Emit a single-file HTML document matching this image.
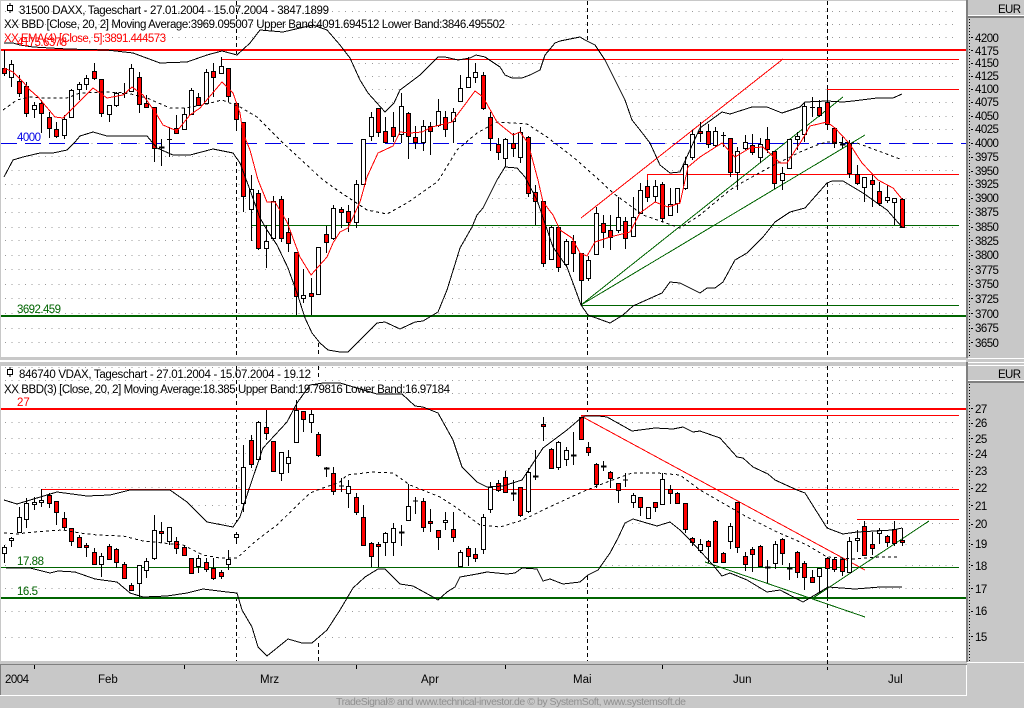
<!DOCTYPE html>
<html><head><meta charset="utf-8"><title>DAX VDAX chart</title>
<style>
html,body{margin:0;padding:0;background:#c8c8c8;width:1024px;height:708px;overflow:hidden}
svg{display:block}
text{font-family:"Liberation Sans",sans-serif;font-size:11.5px}
</style></head><body>
<svg xmlns="http://www.w3.org/2000/svg" width="1024" height="708" viewBox="0 0 1024 708" fill="none" shape-rendering="crispEdges">
<rect width="1024" height="708" fill="#c8c8c8"/>
<!-- chart backgrounds -->
<rect x="1" y="1" width="965" height="356" fill="#fff"/>
<rect x="1" y="366" width="965" height="295" fill="#fff"/>
<rect x="0" y="360" width="966" height="2" fill="#fff"/>
<!-- dotted grid top -->
<path stroke="#999" stroke-dasharray="1 5.67" d="M5 37.5H958M5 50.5H958M5 63.5H958M5 76.5H958M5 89.5H958M5 102.5H958M5 116.5H958M5 129.5H958M5 143.5H958M5 156.5H958M5 170.5H958M5 184.5H958M5 198.5H958M5 212.5H958M5 227.5H958M5 240.5H958M5 255.5H958M5 269.5H958M5 284.5H958M5 298.5H958M5 313.5H958M5 328.5H958M5 342.5H958M5 24.5H958M5 11.5H958"/>
<!-- dotted grid bottom -->
<path stroke="#999" stroke-dasharray="1 5.67" d="M5 367.5H958M5 380.5H958M5 393.5H958M5 422.5H958M5 438.5H958M5 453.5H958M5 470.5H958M5 487.5H958M5 505.5H958M5 523.5H958M5 544.5H958M5 565.5H958M5 588.5H958M5 611.5H958M5 637.5H958"/>
<!-- vertical dashed -->
<path stroke="#000" stroke-dasharray="4 3" d="M236.5 1V357M587.5 1V357M827.5 1V357M318.5 343V357M236.5 366V661M318.5 366V380M318.5 643V661M587.5 366V661M827.5 366V670"/>
<!-- white fill between bands -->
<polygon fill="#fff" points="4,43 13,43 20,45 33,47 67,49 107,50 133,53 160,63 187,62 207,55 222,51 237,55 250,43 260,30 283,32 313,25 327,30 340,45 350,58 360,80 368,93 385,112 394,103 400,90 420,75 438,57 445,57 458,60 470,58 476,55 485,57 500,67 505,75 512,78 522,78 530,75 540,70 545,55 555,43 560,41 580,37 585,40 595,45 605,60 615,80 625,100 632,120 640,130 650,143 660,165 670,173 680,172 690,150 700,128 722,112 730,114 752,107 767,107 782,113 800,107 805,102 827,101 843,102 853,101 877,98 893,98 902,94 902,227 887,210 863,193 843,181 832,181 827,183 805,208 790,212 775,222 763,237 747,253 735,260 723,282 715,288 707,288 700,293 680,283 670,282 662,293 633,306 623,315 610,323 588,315 581,305 573,283 567,267 553,247 537,200 525,177 517,168 505,167 497,180 483,208 477,215 472,227 460,248 447,290 438,312 423,321 415,322 400,329 385,322 377,323 367,333 348,352 340,352 328,350 320,343 312,333 305,318 297,293 288,268 277,245 267,230 260,218 240,163 233,153 213,149 190,155 173,155 157,148 147,136 107,136 93,132 80,136 75,142 67,150 53,153 40,153 23,157 13,160 4,177"/>
<polygon fill="#fff" points="4,500 17,504 37,498 57,492 87,496 110,495 130,490 170,490 187,502 207,522 233,527 240,517 248,492 263,448 287,422 297,403 310,385 323,383 340,383 377,394 402,394 415,406 423,407 438,413 453,440 462,467 477,482 487,487 503,486 522,480 543,448 567,430 581,418 585,416 598,416 607,417 632,431 655,428 673,429 683,427 693,432 700,431 720,438 737,457 743,458 753,467 768,474 775,480 797,490 805,493 827,528 843,534 857,532 893,530 902,528 902,587 880,587 855,589 828,587 820,592 803,602 780,590 767,592 747,580 730,573 722,576 708,563 690,550 680,530 670,522 657,526 633,519 625,523 618,538 598,570 588,575 580,582 563,584 550,579 543,581 537,569 522,568 515,573 507,574 487,572 477,574 460,577 455,587 447,592 438,600 433,597 413,586 400,584 385,569 378,569 365,577 353,588 340,610 327,630 312,643 302,643 288,639 267,656 258,647 252,627 242,610 237,593 227,592 203,589 187,593 167,596 143,597 130,593 117,582 95,579 75,572 58,571 50,573 30,568 6,568"/>
<!-- horizontal lines top -->
<path stroke="#0000e6" stroke-dasharray="16 8" d="M1 143.5H966"/>
<rect x="1" y="49" width="965" height="2" fill="#f00"/>
<path stroke="#f00" d="M222 59.5H959M647 174.5H959M647.5 174V186M827 89.5H959"/>
<path stroke="#f00" d="M581 218L783 59"/>
<rect x="1" y="315" width="965" height="2" fill="#006400"/>
<path stroke="#006400" d="M251 225.5H959M581 305.5H959M581 305L865 135M581 305L843 97"/>
<!-- horizontal lines bottom -->
<rect x="1" y="408" width="965" height="2" fill="#f00"/>
<path stroke="#f00" d="M581 415.5H959M41 489.5H959M41.5 489V500M857 519.5H959M581 416L865 570"/>
<rect x="1" y="597" width="965" height="2" fill="#006400"/>
<path stroke="#006400" d="M1 567.5H959M705 562L865 617M813 598L929 521"/>
<!-- wicks top -->
<path stroke="#000" d="M4.5 50V76M11.5 60V87M19.5 75V97M26.5 82V117M34.5 102V118M41.5 100V133M49.5 112V138M56.5 122V138M64.5 115V139M71.5 89V117M79.5 82V100M86.5 75V90M94.5 63V80M101.5 79V117M109.5 105V122M116.5 92V107M124.5 83V98M122 93.5h5M131.5 64V91M139.5 72V113M146.5 95V107M154.5 107V162M161.5 139V166M159 147h5v1h-5M169.5 127V157M167 139.5h5M176.5 115V133M184.5 108V130M191.5 88V115M198.5 93V106M206.5 69V103M213.5 63V97M221.5 57V73M228.5 68V102M236.5 103V131M243.5 122V212M251.5 175V241M258.5 190V250M266.5 225V268M273.5 196V238M281.5 196V242M288.5 218V252M296.5 252V315M303.5 269V303M311.5 278V315M326.5 226V253M333.5 205V240M341.5 207V228M348.5 205V232M356.5 180V228M371.5 112V141M378.5 108V137M385.5 117V143M393.5 112V142M401.5 93V143M408.5 112V159M415.5 126V149M423.5 120V151M430.5 122V155M438.5 99V127M445.5 111V137M453.5 108V143M460.5 75V101M468.5 57V87M475.5 63V83M483.5 72V110M490.5 112V151M498.5 138V160M505.5 138V167M513.5 133V157M520.5 127V163M528.5 136V197M535.5 185V225M543.5 201V267M551.5 226V260M558.5 227V272M566.5 239V266M573.5 235V272M581.5 253V306M588.5 256V281M596.5 207V255M603.5 215V248M610.5 215V250M618.5 197V233M625.5 217V249M633.5 197V237M640.5 183V213M647.5 180V202M655.5 180V202M662.5 182V222M670.5 188V215M677.5 188V213M685.5 157V190M692.5 130V160M700.5 122V142M708.5 124V148M715.5 127V147M723.5 132V147M721 135.5h5M730.5 138V177M737.5 147V190M745.5 135V150M752.5 134V155M760.5 138V163M767.5 127V153M774.5 151V189M782.5 167V190M789.5 139V168M797.5 132V150M804.5 103V142M812.5 97V117M810 107.5h5M819.5 100V117M827.5 90V130M834.5 127V148M842.5 137V148M840 144h5v1h-5M849.5 140V178M857.5 165V185M864.5 177V202M872.5 175V207M879.5 182V206M887.5 185V203M894.5 198V225M902.5 198V228"/>
<!-- white bodies top -->
<path fill="#fff" stroke="#000" d="M9.5 64.5h4V77.5h-4zM32.5 105.5h4V109.5h-4zM62.5 119.5h4V135.5h-4zM69.5 90.5h4V117.5h-4zM77.5 84.5h4V89.5h-4zM84.5 78.5h4V84.5h-4zM107.5 105.5h4V114.5h-4zM114.5 93.5h4V105.5h-4zM129.5 68.5h4V91.5h-4zM182.5 114.5h4V129.5h-4zM189.5 90.5h4V114.5h-4zM204.5 72.5h4V103.5h-4zM219.5 66.5h4V73.5h-4zM249.5 189.5h4V209.5h-4zM264.5 241.5h4V248.5h-4zM271.5 201.5h4V238.5h-4zM301.5 295.5h4V298.5h-4zM316.5 247.5h4V294.5h-4zM331.5 208.5h4V238.5h-4zM354.5 184.5h4V222.5h-4zM361.5 139.5h4V184.5h-4zM369.5 117.5h4V136.5h-4zM399.5 106.5h4V134.5h-4zM421.5 126.5h4V142.5h-4zM436.5 111.5h4V125.5h-4zM451.5 112.5h4V121.5h-4zM458.5 88.5h4V101.5h-4zM466.5 77.5h4V87.5h-4zM473.5 72.5h4V77.5h-4zM503.5 139.5h4V158.5h-4zM518.5 132.5h4V157.5h-4zM549.5 227.5h4V259.5h-4zM564.5 241.5h4V264.5h-4zM586.5 260.5h4V278.5h-4zM594.5 213.5h4V254.5h-4zM616.5 217.5h4V230.5h-4zM631.5 217.5h4V236.5h-4zM638.5 190.5h4V213.5h-4zM653.5 186.5h4V196.5h-4zM668.5 204.5h4V215.5h-4zM675.5 188.5h4V203.5h-4zM683.5 164.5h4V188.5h-4zM690.5 134.5h4V157.5h-4zM713.5 131.5h4V145.5h-4zM735.5 151.5h4V172.5h-4zM743.5 142.5h4V148.5h-4zM758.5 144.5h4V157.5h-4zM780.5 173.5h4V180.5h-4zM787.5 139.5h4V168.5h-4zM795.5 136.5h4V139.5h-4zM802.5 106.5h4V134.5h-4zM862.5 177.5h4V187.5h-4zM885.5 197.5h4V200.5h-4zM892.5 198.5h4V202.5h-4z"/>
<!-- red bodies top -->
<path fill="#f00" stroke="#000" d="M2.5 68.5h4V73.5h-4zM17.5 81.5h4V93.5h-4zM24.5 86.5h4V113.5h-4zM39.5 103.5h4V113.5h-4zM47.5 117.5h4V128.5h-4zM54.5 129.5h4V136.5h-4zM92.5 71.5h4V78.5h-4zM99.5 79.5h4V113.5h-4zM137.5 77.5h4V104.5h-4zM144.5 103.5h4V107.5h-4zM152.5 107.5h4V148.5h-4zM174.5 128.5h4V133.5h-4zM196.5 97.5h4V105.5h-4zM211.5 71.5h4V77.5h-4zM226.5 68.5h4V96.5h-4zM234.5 103.5h4V119.5h-4zM241.5 122.5h4V196.5h-4zM256.5 193.5h4V248.5h-4zM279.5 199.5h4V238.5h-4zM286.5 232.5h4V243.5h-4zM294.5 252.5h4V296.5h-4zM309.5 293.5h4V296.5h-4zM324.5 234.5h4V242.5h-4zM339.5 209.5h4V212.5h-4zM346.5 211.5h4V222.5h-4zM376.5 108.5h4V132.5h-4zM383.5 131.5h4V142.5h-4zM391.5 127.5h4V136.5h-4zM406.5 113.5h4V136.5h-4zM413.5 137.5h4V142.5h-4zM428.5 126.5h4V131.5h-4zM443.5 117.5h4V129.5h-4zM481.5 75.5h4V108.5h-4zM488.5 117.5h4V138.5h-4zM496.5 144.5h4V152.5h-4zM511.5 143.5h4V148.5h-4zM526.5 137.5h4V193.5h-4zM533.5 192.5h4V201.5h-4zM541.5 201.5h4V263.5h-4zM556.5 227.5h4V267.5h-4zM571.5 241.5h4V253.5h-4zM579.5 253.5h4V280.5h-4zM601.5 223.5h4V232.5h-4zM608.5 230.5h4V237.5h-4zM623.5 221.5h4V238.5h-4zM645.5 186.5h4V197.5h-4zM660.5 184.5h4V218.5h-4zM698.5 131.5h4V133.5h-4zM706.5 131.5h4V144.5h-4zM728.5 138.5h4V172.5h-4zM750.5 145.5h4V152.5h-4zM765.5 139.5h4V149.5h-4zM772.5 151.5h4V183.5h-4zM817.5 107.5h4V115.5h-4zM825.5 102.5h4V124.5h-4zM832.5 128.5h4V143.5h-4zM847.5 143.5h4V173.5h-4zM855.5 174.5h4V183.5h-4zM870.5 180.5h4V184.5h-4zM877.5 191.5h4V203.5h-4zM900.5 199.5h4V227.5h-4z"/>
<!-- wicks bottom -->
<path stroke="#000" d="M4.5 545V563M11.5 537V547M19.5 507V532M26.5 498V528M34.5 497V510M41.5 489V507M49.5 493V508M56.5 501V525M64.5 512V530M71.5 528V546M79.5 535V547M86.5 543V557M94.5 548V565M101.5 553V577M109.5 544V560M116.5 548V568M124.5 562V579M131.5 583V591M139.5 565V597M146.5 558V578M154.5 515V560M161.5 522V543M169.5 527V545M176.5 537V554M184.5 545V556M191.5 558V573M198.5 555V573M206.5 558V572M213.5 558V580M221.5 570V579M228.5 550V570M236.5 532V544M243.5 445V512M251.5 435V468M258.5 421V460M266.5 410V440M281.5 452V481M288.5 450V473M296.5 400V442M303.5 411V432M311.5 410V433M318.5 432V457M326.5 467V477M324 468h5v1h-5M333.5 467V495M341.5 478V492M339 486h5M348.5 480V508M356.5 493V515M363.5 505V545M371.5 542V567M378.5 542V567M385.5 532V556M393.5 523V556M401.5 525V546M399 532h5v1h-5M408.5 484V521M415.5 497V514M413 501h5M423.5 498V532M430.5 509V532M438.5 530V550M445.5 512V530M453.5 512V542M460.5 550V567M468.5 546V566M475.5 548V562M483.5 514V554M490.5 482V513M498.5 480V492M505.5 471V493M513.5 480V501M511 493h5v1h-5M520.5 487V517M528.5 468V513M535.5 450V480M533 476h5v1h-5M543.5 417V441M551.5 448V468M558.5 441V470M566.5 447V466M573.5 432V465M571 455h5v1h-5M581.5 417V440M588.5 442V456M596.5 463V488M603.5 461V471M601 466h5v1h-5M610.5 471V488M618.5 483V503M625.5 473V487M623 480h5M633.5 493V508M640.5 497V516M648.5 507V519M655.5 502V512M662.5 473V504M670.5 485V504M677.5 492V504M685.5 503V533M692.5 537V546M700.5 539V553M708.5 540V563M715.5 520V562M723.5 552V563M730.5 523V549M737.5 502V553M745.5 552V571M752.5 547V572M760.5 545V566M767.5 560V583M765 567h5v1h-5M775.5 541V569M782.5 538V565M789.5 563V580M787 568h5v1h-5M797.5 551V578M804.5 561V590M812.5 570V583M819.5 568V593M827.5 557V598M834.5 558V572M842.5 558V576M849.5 537V573M857.5 530V552M864.5 521V556M872.5 532V555M879.5 528V544M887.5 535V547M894.5 521V546M902.5 528V546"/>
<!-- white bodies bottom -->
<path fill="#fff" stroke="#000" d="M2.5 547.5h4V553.5h-4zM9.5 538.5h4V540.5h-4zM17.5 517.5h4V532.5h-4zM24.5 503.5h4V519.5h-4zM32.5 502.5h4V504.5h-4zM39.5 500.5h4V502.5h-4zM99.5 556.5h4V564.5h-4zM137.5 565.5h4V583.5h-4zM144.5 561.5h4V570.5h-4zM152.5 530.5h4V558.5h-4zM167.5 527.5h4V541.5h-4zM196.5 558.5h4V566.5h-4zM226.5 559.5h4V564.5h-4zM234.5 534.5h4V537.5h-4zM241.5 467.5h4V503.5h-4zM256.5 422.5h4V459.5h-4zM279.5 452.5h4V473.5h-4zM286.5 457.5h4V463.5h-4zM294.5 410.5h4V442.5h-4zM309.5 414.5h4V422.5h-4zM346.5 486.5h4V493.5h-4zM383.5 533.5h4V542.5h-4zM391.5 528.5h4V542.5h-4zM406.5 506.5h4V520.5h-4zM443.5 520.5h4V522.5h-4zM458.5 552.5h4V566.5h-4zM481.5 517.5h4V549.5h-4zM488.5 487.5h4V509.5h-4zM526.5 472.5h4V511.5h-4zM556.5 442.5h4V467.5h-4zM564.5 450.5h4V459.5h-4zM631.5 495.5h4V502.5h-4zM646.5 507.5h4V518.5h-4zM660.5 479.5h4V504.5h-4zM698.5 544.5h4V550.5h-4zM728.5 526.5h4V541.5h-4zM773.5 544.5h4V563.5h-4zM817.5 568.5h4V576.5h-4zM847.5 541.5h4V572.5h-4zM855.5 538.5h4V540.5h-4zM877.5 530.5h4V533.5h-4z"/>
<!-- red bodies bottom -->
<path fill="#f00" stroke="#000" d="M47.5 495.5h4V503.5h-4zM54.5 501.5h4V512.5h-4zM62.5 518.5h4V527.5h-4zM69.5 528.5h4V541.5h-4zM77.5 537.5h4V547.5h-4zM84.5 545.5h4V547.5h-4zM92.5 552.5h4V564.5h-4zM107.5 546.5h4V559.5h-4zM114.5 549.5h4V562.5h-4zM122.5 564.5h4V578.5h-4zM129.5 585.5h4V590.5h-4zM159.5 531.5h4V533.5h-4zM174.5 541.5h4V548.5h-4zM182.5 547.5h4V555.5h-4zM189.5 558.5h4V573.5h-4zM204.5 562.5h4V569.5h-4zM211.5 568.5h4V578.5h-4zM219.5 572.5h4V576.5h-4zM249.5 440.5h4V464.5h-4zM264.5 427.5h4V433.5h-4zM271.5 441.5h4V471.5h-4zM301.5 411.5h4V419.5h-4zM316.5 434.5h4V455.5h-4zM331.5 473.5h4V491.5h-4zM354.5 497.5h4V512.5h-4zM361.5 517.5h4V545.5h-4zM369.5 543.5h4V556.5h-4zM376.5 544.5h4V546.5h-4zM421.5 501.5h4V527.5h-4zM428.5 521.5h4V523.5h-4zM436.5 530.5h4V537.5h-4zM451.5 529.5h4V537.5h-4zM466.5 548.5h4V556.5h-4zM473.5 554.5h4V558.5h-4zM496.5 483.5h4V490.5h-4zM503.5 477.5h4V492.5h-4zM518.5 487.5h4V515.5h-4zM541.5 424.5h4V426.5h-4zM549.5 449.5h4V468.5h-4zM579.5 417.5h4V439.5h-4zM586.5 447.5h4V452.5h-4zM594.5 464.5h4V484.5h-4zM608.5 472.5h4V478.5h-4zM616.5 483.5h4V490.5h-4zM638.5 497.5h4V507.5h-4zM653.5 502.5h4V507.5h-4zM668.5 489.5h4V493.5h-4zM675.5 493.5h4V503.5h-4zM683.5 503.5h4V529.5h-4zM690.5 538.5h4V542.5h-4zM706.5 541.5h4V546.5h-4zM713.5 521.5h4V562.5h-4zM721.5 553.5h4V562.5h-4zM735.5 502.5h4V547.5h-4zM743.5 556.5h4V564.5h-4zM750.5 549.5h4V554.5h-4zM758.5 546.5h4V566.5h-4zM780.5 539.5h4V553.5h-4zM795.5 552.5h4V572.5h-4zM802.5 563.5h4V577.5h-4zM810.5 577.5h4V582.5h-4zM825.5 558.5h4V568.5h-4zM832.5 559.5h4V569.5h-4zM840.5 559.5h4V571.5h-4zM862.5 526.5h4V555.5h-4zM870.5 544.5h4V548.5h-4zM885.5 536.5h4V542.5h-4zM892.5 529.5h4V543.5h-4zM900.5 540.5h4V542.5h-4z"/>
<!-- top bands -->
<polyline stroke="#000" points="4,43 13,43 20,45 33,47 67,49 107,50 133,53 160,63 187,62 207,55 222,51 237,55 250,43 260,30 283,32 313,25 327,30 340,45 350,58 360,80 368,93 385,112 394,103 400,90 420,75 438,57 445,57 458,60 470,58 476,55 485,57 500,67 505,75 512,78 522,78 530,75 540,70 545,55 555,43 560,41 580,37 585,40 595,45 605,60 615,80 625,100 632,120 640,130 650,143 660,165 670,173 680,172 690,150 700,128 722,112 730,114 752,107 767,107 782,113 800,107 805,102 827,101 843,102 853,101 877,98 893,98 902,94"/>
<polyline stroke="#000" points="4,177 13,160 23,157 40,153 53,153 67,150 75,142 80,136 93,132 107,136 147,136 157,148 173,155 190,155 213,149 233,153 240,163 250,190 260,218 267,230 277,245 288,268 297,293 305,318 312,333 320,343 328,350 340,352 348,352 367,333 377,323 385,322 400,329 415,322 423,321 438,312 447,290 460,248 472,227 477,215 483,208 497,180 505,167 517,168 525,177 537,200 553,247 567,267 573,283 581,305 588,315 610,323 623,315 633,306 662,293 670,282 680,283 700,293 707,288 715,288 723,282 735,260 747,253 763,237 775,222 790,212 805,208 827,183 832,181 843,181 863,193 887,210 902,227"/>
<polyline stroke="#000" stroke-dasharray="3 3" points="3,110 17,100 30,97 43,98 67,98 80,93 107,92 127,93 147,98 170,108 185,108 203,105 222,100 240,107 257,117 283,143 323,180 340,192 367,210 387,214 407,203 437,182 440,178 457,150 477,133 497,122 527,124 547,137 573,157 597,178 613,193 643,215 663,222 680,228 700,215 730,190 743,182 770,167 800,152 817,145 827,142 857,143 900,159"/>
<polyline stroke="#f00" points="4,68 13,72 23,82 30,90 38,97 55,117 63,118 83,98 93,88 107,98 123,95 132,87 143,95 157,115 163,125 177,131 190,115 200,108 222,82 233,93 240,113 243,133 250,150 258,180 267,202 275,202 287,222 300,257 311,275 327,257 333,243 340,232 348,228 360,202 367,177 378,153 393,146 400,132 410,133 422,132 432,127 452,122 475,91 483,97 497,122 513,135 520,132 528,143 538,180 543,202 553,215 560,230 572,238 580,253 587,256 595,242 610,237 630,232 640,213 655,202 668,207 680,203 688,167 700,157 722,143 735,157 750,148 763,147 780,163 787,163 802,140 810,126 827,122 835,128 849,143 862,163 878,180 893,188 902,199"/>
<!-- bottom bands -->
<polyline stroke="#000" points="4,500 17,504 37,498 57,492 87,496 110,495 130,490 170,490 187,502 207,522 233,527 240,517 248,492 263,448 287,422 297,403 310,385 323,383 340,383 377,394 402,394 415,406 423,407 438,413 453,440 462,467 477,482 487,487 503,486 522,480 543,448 567,430 581,418 585,416 598,416 607,417 632,431 655,428 673,429 683,427 693,432 700,431 720,438 737,457 743,458 753,467 768,474 775,480 797,490 805,493 827,528 843,534 857,532 893,530 902,528"/>
<polyline stroke="#000" points="6,568 30,568 50,573 58,571 75,572 95,579 117,582 130,593 143,597 167,596 187,593 203,589 227,592 237,593 242,610 252,627 258,647 267,656 288,639 302,643 312,643 327,630 340,610 353,588 365,577 378,569 385,569 400,584 413,586 433,597 438,600 447,592 455,587 460,577 477,574 487,572 507,574 515,573 522,568 537,569 543,581 550,579 563,584 580,582 588,575 598,570 610,553 618,538 625,523 633,519 657,526 670,522 680,530 690,540 713,565 722,576 730,573 747,580 767,592 780,590 803,602 820,592 828,587 855,589 880,587 902,587"/>
<polyline stroke="#000" stroke-dasharray="3 3" points="4,533 17,534 33,532 63,530 80,533 97,535 123,536 143,541 183,545 203,555 220,558 237,558 257,540 277,525 310,493 323,488 340,482 347,475 373,472 393,473 410,485 440,497 457,508 480,525 500,527 523,520 543,510 582,492 607,482 632,473 657,473 680,475 700,490 747,517 777,532 807,545 827,557 853,559 880,557 900,557"/>
<!-- axis panel structure -->
<rect x="966" y="0" width="2" height="358" fill="#808080"/>
<rect x="966" y="362" width="2" height="300" fill="#808080"/>
<rect x="968" y="15" width="56" height="1" fill="#fff"/>
<rect x="968" y="16" width="56" height="2" fill="#808080"/>
<rect x="968" y="358" width="56" height="1" fill="#fff"/>
<rect x="968" y="362" width="56" height="1" fill="#fff"/>
<rect x="968" y="365" width="56" height="1" fill="#fff"/>
<rect x="968" y="380" width="56" height="1" fill="#fff"/>
<rect x="968" y="381" width="56" height="2" fill="#808080"/>
<path stroke="#000" stroke-dasharray="1 2" d="M969.5 19V357M969.5 384V661"/>
<path stroke="#000" d="M971 37.5h2M971 50.5h2M971 63.5h2M971 76.5h2M971 89.5h2M971 102.5h2M971 116.5h2M971 129.5h2M971 143.5h2M971 157.5h2M971 171.5h2M971 184.5h2M971 198.5h2M971 212.5h2M971 227.5h2M971 240.5h2M971 255.5h2M971 269.5h2M971 284.5h2M971 298.5h2M971 313.5h2M971 328.5h2M971 342.5h2M971 408.5h2M971 423.5h2M971 438.5h2M971 454.5h2M971 471.5h2M971 488.5h2M971 505.5h2M971 524.5h2M971 544.5h2M971 565.5h2M971 588.5h2M971 611.5h2M971 636.5h2"/>
<!-- x axis -->
<rect x="0" y="664" width="967" height="1" fill="#808080"/>
<rect x="0" y="664" width="1" height="31" fill="#808080"/>
<rect x="0" y="695" width="967" height="1" fill="#fff"/>
<rect x="966" y="665" width="1" height="31" fill="#fff"/>
<rect x="967" y="662" width="57" height="1" fill="#fff"/>
<path stroke="#000" d="M34.5 665V669M184.5 665V669M356.5 665V669M505.5 665V669M662.5 665V669"/>
<!-- text -->
<g shape-rendering="auto">
<path stroke="#000" d="M7.5 5.5h5v5h-5zM10 3v2M10 11v2" shape-rendering="crispEdges"/>
<text x="19" y="14" fill="#000" textLength="310">31500  DAXX, Tageschart - 27.01.2004 - 15.07.2004 - 3847.1899</text>
<text x="4" y="28" fill="#000" textLength="501">XX BBD [Close, 20, 2] Moving Average:3969.095007 Upper Band:4091.694512 Lower Band:3846.495502</text>
<text x="17" y="46" fill="#f00" textLength="50">4175.6378</text>
<text x="4" y="42" fill="#f00" textLength="162">XX EMA(4) [Close, 5]:3891.444573</text>
<text x="17" y="141" fill="#0000e6" textLength="24">4000</text>
<text x="17" y="313" fill="#006400" textLength="44">3692.459</text>
<path stroke="#000" d="M7.5 369.5h5v5h-5zM10 367v2M10 375v2" shape-rendering="crispEdges"/>
<text x="19" y="378" fill="#000" textLength="292">846740  VDAX, Tageschart - 27.01.2004 - 15.07.2004 - 19.12</text>
<text x="4" y="393" fill="#000" textLength="446">XX BBD(3) [Close, 20, 2] Moving Average:18.385 Upper Band:19.79816 Lower Band:16.97184</text>
<text x="17" y="406" fill="#f00">27</text>
<text x="17" y="565" fill="#006400" textLength="27">17.88</text>
<text x="17" y="595" fill="#006400" textLength="21">16.5</text>
<text x="998" y="13" fill="#000" textLength="23">EUR</text>
<text x="998" y="378" fill="#000" textLength="23">EUR</text>
<g fill="#000" letter-spacing="-.55">
<text x="975" y="42">4200</text><text x="975" y="55">4175</text><text x="975" y="67">4150</text><text x="975" y="80">4125</text><text x="975" y="93">4100</text><text x="975" y="106">4075</text><text x="975" y="120">4050</text><text x="975" y="133">4025</text><text x="975" y="147">4000</text><text x="975" y="161">3975</text><text x="975" y="175">3950</text><text x="975" y="188">3925</text><text x="975" y="202">3900</text><text x="975" y="216">3875</text><text x="975" y="231">3850</text><text x="975" y="245">3825</text><text x="975" y="259">3800</text><text x="975" y="274">3775</text><text x="975" y="288">3750</text><text x="975" y="303">3725</text><text x="975" y="318">3700</text><text x="975" y="332">3675</text><text x="975" y="347">3650</text>
<text x="975" y="413">27</text><text x="975" y="427">26</text><text x="975" y="443">25</text><text x="975" y="458">24</text><text x="975" y="475">23</text><text x="975" y="492">22</text><text x="975" y="510">21</text><text x="975" y="528">20</text><text x="975" y="548">19</text><text x="975" y="570">18</text><text x="975" y="593">17</text><text x="975" y="615">16</text><text x="975" y="641">15</text>
</g>
<g fill="#000">
<text x="5" y="683" textLength="24">2004</text><text x="98" y="683">Feb</text><text x="260" y="683">Mrz</text><text x="421" y="683">Apr</text><text x="573" y="683">Mai</text><text x="733" y="683">Jun</text><text x="888" y="683">Jul</text>
</g>
<text x="336" y="705" fill="#909090" style="font-size:10.5px" textLength="350">TradeSignal® and www.technical-investor.de © by  SystemSoft, www.systemsoft.de</text>
</g>
</svg>
</body></html>
